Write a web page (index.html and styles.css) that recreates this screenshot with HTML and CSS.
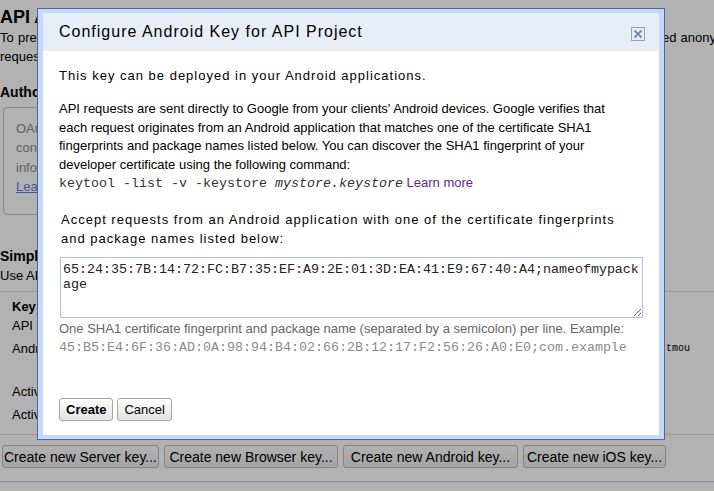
FILE: index.html
```html
<!DOCTYPE html>
<html lang="en">
<head>
<meta charset="utf-8">
<title>Configure Android Key for API Project</title>
<link rel="stylesheet" href="styles.css">
</head>
<body>
<div class="page">
  <h1 class="page-title">API Access</h1>
  <p class="lead">To prevent abuse, Google places limits on API requests. Using a valid OAuth token or API key allows you to exceed anonymous limits by connecting requests back to your project.</p>
  <h2 class="section-title">Authorized API Access</h2>
  <div class="infobox">
    <p>OAuth 2.0 allows users to share specific data with you (for example, contact lists)<br>consent screen shows your product's name, logo and other<br>information. A project can contain up to 20 client IDs.<br><a href="#">Learn more</a></p>
  </div>
  <h2 class="section-title simple">Simple API Access</h2>
  <p class="lead2">Use API keys to identify your project when you do not need to access user data. <a href="#">Learn more</a></p>
  <div class="keytable">
    <div class="kt-head">Key for Android apps (with certificates)</div>
    <div class="kt-row first"><span class="kt-label">API key:</span><span class="kt-value">AIzaSyD-3kq9xL7vN2mP0aBcDeFgHiJkLmNoPq</span></div>
    <div class="kt-row tall"><span class="kt-label">Android apps:</span><span class="kt-value mono">45:B5:E4:6F:36:AD:0A:98:94:B4:02:66:2B:12:17:F2:56:26:A0:E0;com.example.tmou</span></div>
    <div class="kt-row"><span class="kt-label">Activated on:</span><span class="kt-value">Mar 4, 2013 2:15 PM</span></div>
    <div class="kt-row"><span class="kt-label">Activated by:</span><span class="kt-value">developer@example.com – you</span></div>
  </div>
  <div class="key-actions">
    <button class="key-btn key-server">Create new Server key...</button>
    <button class="key-btn key-browser">Create new Browser key...</button>
    <button class="key-btn key-android">Create new Android key...</button>
    <button class="key-btn key-ios">Create new iOS key...</button>
  </div>
  <div class="page-footer"></div>
</div>
<div class="overlay"></div>
<div class="dialog" role="dialog" aria-labelledby="dlg-title">
  <div class="dialog-inner">
    <div class="dialog-titlebar">
      <span class="dialog-title" id="dlg-title">Configure Android Key for API Project</span>
      <button class="dialog-close" aria-label="Close">
        <svg width="14" height="14" viewBox="0 0 14 14"><rect x="0.5" y="0.5" width="13" height="13" fill="none" stroke="#8da5c9"/><path d="M3.5 3.5l7 7M10.5 3.5l-7 7" stroke="#6f89b4" stroke-width="1.8"/></svg>
      </button>
    </div>
    <div class="dialog-body">
      <p class="intro">This key can be deployed in your Android applications.</p>
      <p class="desc">API requests are sent directly to Google from your clients' Android devices. Google verifies that<br>each request originates from an Android application that matches one of the certificate SHA1<br>fingerprints and package names listed below. You can discover the SHA1 fingerprint of your<br>developer certificate using the following command:<br><code class="cmd">keytool -list -v -keystore <em>mystore.keystore</em></code> <a class="learn" href="#">Learn more</a></p>
      <label class="field-label" for="fp">Accept requests from an Android application with one of the certificate fingerprints<br>and package names listed below:</label>
      <textarea id="fp" class="fp-input" spellcheck="false">65:24:35:7B:14:72:FC:B7:35:EF:A9:2E:01:3D:EA:41:E9:67:40:A4;nameofmypackage</textarea>
      <p class="hint">One SHA1 certificate fingerprint and package name (separated by a semicolon) per line. Example:<br><code class="example">45:B5:E4:6F:36:AD:0A:98:94:B4:02:66:2B:12:17:F2:56:26:A0:E0;com.example</code></p>
      <div class="actions">
        <button class="btn btn-primary">Create</button>
        <button class="btn">Cancel</button>
      </div>
    </div>
  </div>
</div>
</body>
</html>
```
FILE: styles.css
```css
* { box-sizing: border-box; }
html, body { margin: 0; height: 100%; }
body {
  font-family: "Liberation Sans", Arial, Helvetica, sans-serif;
  font-size: 13px;
  color: #000;
  background: #fff;
  overflow: hidden;
  position: relative;
}

/* background page */
.page { padding-top: 6px; width: 714px; overflow: hidden; }
.page-title { font-size: 18px; font-weight: bold; line-height: 22px; margin: 0; }
.lead { margin: 0; width: 880px; line-height: 19px; word-spacing: 0.65px; }
.section-title { font-size: 14px; font-weight: bold; line-height: 20px; margin: 16px 0 0; }
.section-title.simple { margin-top: 31px; }
.infobox {
  margin: 5px 0 0 3px;
  width: 640px;
  border: 1px solid #c8c8c8;
  border-radius: 4px;
  padding: 11px 12px 17px;
  color: #8a8a8a;
  line-height: 19.4px;
}
.infobox p { margin: 0; }
.infobox a { color: #5a7fe0; }
.lead2 { margin: 0; line-height: 19px; }
.lead2 a { color: #5a7fe0; }
.keytable {
  margin-top: 6px;
  border-top: 1px solid #dcdcdc;
  border-bottom: 1px solid #dcdcdc;
  padding: 5px 0 10px 12px;
}
.kt-head { font-weight: bold; line-height: 19px; }
.kt-row { display: grid; grid-template-columns: 128px 550px; line-height: 19px; margin-top: 4.5px; }
.kt-row.first { margin-top: 0; }
.kt-row.tall { height: 38px; }
.kt-value { white-space: nowrap; }
.kt-value.mono { font-family: "Liberation Mono", "Courier New", monospace; font-size: 10px; text-align: right; }
.key-actions { display: flex; gap: 5px; margin: 10px 0 0 2px; }
.key-btn {
  height: 23px;
  padding: 0;
  font-family: "Liberation Sans", Arial, sans-serif;
  font-size: 14px;
  color: #000;
  border: 1px solid #bdbdbd;
  border-radius: 3px;
  background: linear-gradient(#ffffff, #ececec);
  white-space: nowrap;
  text-align: center;
}
.key-server { width: 157px; }
.key-browser { width: 174px; }
.key-android { width: 175px; }
.key-ios { width: 143px; }
.page-footer {
  margin-top: 13px;
  height: 10px;
  border-top: 1px solid #c5d2ed;
  box-shadow: inset 0 1px 0 #eaf1ff;
}

.overlay { position: absolute; inset: 0; background: rgba(0, 0, 0, 0.3); }

/* dialog */
.dialog {
  position: absolute;
  left: 37px;
  top: 8px;
  width: 628px;
  border: 1px solid #52688c;
  background: #c3d9ff;
  padding: 4px 5px;
}
.dialog-inner { background: #fff; }
.dialog-titlebar {
  display: flex;
  align-items: center;
  justify-content: space-between;
  height: 38px;
  background: #e8eef8;
  padding: 0 14px 0 16px;
}
.dialog-title { font-size: 16px; letter-spacing: 1px; color: #000; }
.dialog-close {
  width: 14px; height: 14px; padding: 0; border: 0; background: none;
  margin-top: 4px; display: block; cursor: pointer;
}
.dialog-close svg { display: block; }
.dialog-body { padding: 16px 16px 14px; }
.intro { margin: 0; line-height: 18.5px; letter-spacing: 1px; }
.desc { margin: 14.5px 0 0; line-height: 18.5px; white-space: nowrap; }
.cmd { font-family: "Liberation Mono", "Courier New", monospace; font-size: 13.33px; color: #333; }
.learn { color: #5a2a94; text-decoration: none; }
.field-label { display: block; margin-top: 16px; padding-left: 2px; line-height: 19px; letter-spacing: 1px; white-space: nowrap; }
.fp-input {
  display: block;
  margin: 9px 0 0 1px;
  width: 583px;
  height: 61px;
  padding: 4px 2px;
  border: 1px solid #a9c0e8;
  font-family: "Liberation Mono", "Courier New", monospace;
  font-size: 13.33px;
  line-height: 15px;
  color: #222;
  background: #fff;
  outline: none;
}
.hint { margin: 2px 0 0; color: #666; line-height: 18.5px; white-space: nowrap; }
.example { font-family: "Liberation Mono", "Courier New", monospace; font-size: 13.33px; color: #8a8a8a; }
.actions { display: flex; gap: 4px; margin-top: 40px; }
.btn {
  height: 23px;
  padding: 0 6px;
  font-family: "Liberation Sans", Arial, sans-serif;
  font-size: 13px;
  color: #000;
  border: 1px solid #a6a6a6;
  border-radius: 3px;
  background: linear-gradient(#fefefe, #e2e2e2);
}
.btn-primary { font-weight: bold; }
```
